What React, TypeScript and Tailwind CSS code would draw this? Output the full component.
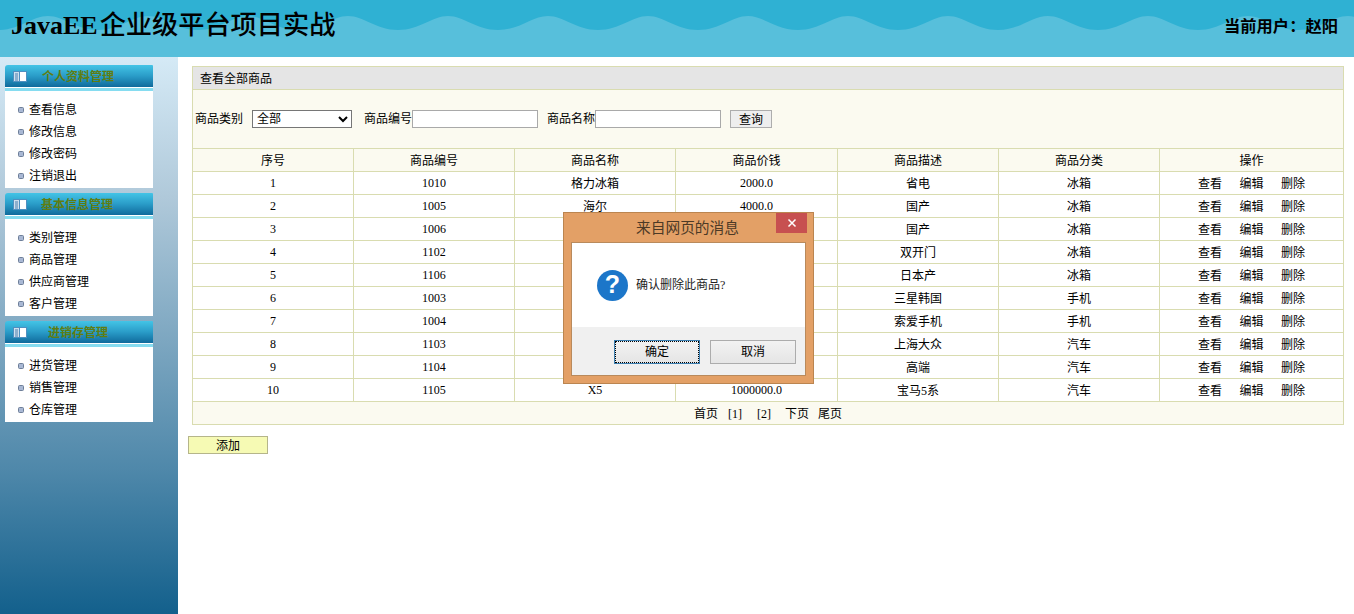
const FONT = "font-['Liberation_Serif','Noto_Sans_CJK_SC',serif]";

const menus = [
  { title: "个人资料管理", items: ["查看信息", "修改信息", "修改密码", "注销退出"], pad: "pl-[15px]" },
  { title: "基本信息管理", items: ["类别管理", "商品管理", "供应商管理", "客户管理"], pad: "pl-[14px]" },
  { title: "进销存管理", items: ["进货管理", "销售管理", "仓库管理"], pad: "pl-[21px]" },
];

const columns = ["序号", "商品编号", "商品名称", "商品价钱", "商品描述", "商品分类", "操作"];
const widths = ["w-[161px]", "w-[161px]", "w-[161px]", "w-[162px]", "w-[161px]", "w-[161px]", "w-[184px]"];

const rows = [
  ["1", "1010", "格力冰箱", "2000.0", "省电", "冰箱"],
  ["2", "1005", "海尔", "4000.0", "国产", "冰箱"],
  ["3", "1006", "", "", "国产", "冰箱"],
  ["4", "1102", "", "", "双开门", "冰箱"],
  ["5", "1106", "", "", "日本产", "冰箱"],
  ["6", "1003", "", "", "三星韩国", "手机"],
  ["7", "1004", "", "", "索爱手机", "手机"],
  ["8", "1103", "", "", "上海大众", "汽车"],
  ["9", "1104", "", "", "高端", "汽车"],
  ["10", "1105", "X5", "1000000.0", "宝马5系", "汽车"],
];

let wave = "M0 57 L0 30";
for (let x = -102; x < 1354; x += 100) {
  wave += ` L${x} 30 C${x + 22} 30 ${x + 34} 16 ${x + 50} 16 C${x + 66} 16 ${x + 78} 30 ${x + 100} 30`;
}
wave += " L1354 57 Z";

function BookIcon() {
  return (
    <svg width="14" height="11" viewBox="0 0 14 11" className="mb-[2px] shrink-0">
      <rect x="0.5" y="0.5" width="13" height="10" fill="#ffffff" stroke="#4f8fc0" />
      <rect x="1" y="1" width="5" height="9" fill="#cfe0ee" />
      <path d="M2 3h3M2 5h3M2 7h3M2 9h3" stroke="#4a7fae" strokeWidth="1" />
      <path d="M6.5 1v9" stroke="#4f8fc0" />
    </svg>
  );
}

function SideMenu({ title, items, pad }: { title: string; items: string[]; pad: string }) {
  return (
    <div className="w-[148px]">
      <div className="flex h-[22px] items-center rounded-tl-[3px] rounded-tr-[1px] bg-[linear-gradient(#43c4e6,#2a9cc8_50%,#0f6a9c)] pl-[8px] pt-[2px]">
        <BookIcon />
        <span className={`${pad} text-[12px] font-bold text-[#5f7d12]`}>{title}</span>
      </div>
      <div className="h-px bg-white" />
      <div className="h-[3px] bg-[#86dcf0]" />
      <ul className="flex flex-col bg-white pb-px pt-[8px]">
        {items.map((item) => (
          <li key={item} className="flex h-[22px] items-center gap-[5px] pl-[13px] text-[12px] text-black">
            <span className="h-[6px] w-[6px] rounded-[1.5px] border border-[#6e7f99] bg-[#a9b8d4]" />
            {item}
          </li>
        ))}
      </ul>
    </div>
  );
}

function Dialog() {
  return (
    <div className="absolute left-[563px] top-[212px] flex h-[172px] w-[251px] flex-col border border-[#bb8550] bg-[#e3a066] px-[7px] pb-[7px]">
      <div className="relative flex h-[29px] items-center justify-center pr-[2px] pt-[2px] text-[14.7px] text-[#4d3a26]">
        来自网页的消息
        <button className="absolute right-[-1px] top-0 flex h-[20px] w-[31px] items-center justify-center bg-[#c75050]">
          <svg width="10" height="10" viewBox="0 0 10 10">
            <path d="M1.5 1.5l7 7M8.5 1.5l-7 7" stroke="#ffffff" strokeWidth="1.5" />
          </svg>
        </button>
      </div>
      <div className="flex flex-1 flex-col border border-[#b98a5c] bg-white">
        <div className="flex flex-1 items-center gap-[8px] pl-[25px]">
          <div className="flex h-[31px] w-[31px] items-center justify-center rounded-full bg-[#1c76c9] text-[25px] font-bold text-white">
            <span className="font-['Liberation_Sans',sans-serif]">?</span>
          </div>
          <span className="text-[12px] text-[#222222]">确认删除此商品?</span>
        </div>
        <div className="flex h-[48px] items-start justify-end gap-[10px] bg-[#f0f0f0] pr-[9px] pt-[13px]">
          <button className="flex h-[24px] w-[86px] items-center justify-center border border-[#3c7fb1] bg-[linear-gradient(#f2f2f2,#e5e5e5)] text-[12px] text-black outline-1 -outline-offset-2 outline-dotted outline-black">
            确定
          </button>
          <button className="flex h-[24px] w-[86px] items-center justify-center border border-[#acacac] bg-[linear-gradient(#f2f2f2,#e5e5e5)] text-[12px] text-black">
            取消
          </button>
        </div>
      </div>
    </div>
  );
}

export default function App() {
  return (
    <div className={`relative flex h-screen w-full flex-col overflow-hidden bg-white ${FONT}`}>
      <header className="relative flex h-[57px] shrink-0 items-center justify-between overflow-hidden bg-[#2fb1d3] pb-[5px] pl-[11px] pr-[16px]">
        <svg className="absolute left-0 top-0" width="1354" height="57" viewBox="0 0 1354 57">
          <path d={wave} fill="#57bfdb" />
        </svg>
        <h1 className="relative flex items-baseline text-[26px] text-black">
          <span className="font-bold">JavaEE</span>
          <span className="pl-[2px] text-[26.2px] font-medium">企业级平台项目实战</span>
        </h1>
        <span className="relative pt-[3px] text-[16.3px] font-bold text-black">当前用户：赵阳</span>
      </header>

      <div className="flex flex-1">
        <aside className="flex w-[178px] shrink-0 flex-col gap-[5px] bg-[linear-gradient(#d5eaf6,#b0c9da_25%,#4f88aa_74%,#13608c)] pl-[5px] pt-[8px]">
          {menus.map((menu) => (
            <SideMenu key={menu.title} {...menu} />
          ))}
        </aside>

        <main className="flex flex-1 flex-col pl-[10px] pt-[9px]">
          <table className="ml-[4px] w-[1152px] table-fixed border-collapse text-[12px] text-black">
            <colgroup>
              {widths.map((w, i) => (
                <col key={i} className={w} />
              ))}
            </colgroup>
            <tbody>
              <tr>
                <td colSpan={7} className="h-[23px] border border-[#d9dcb0] bg-[#e5e5e5] pl-[7px] pt-px">
                  查看全部商品
                </td>
              </tr>
              <tr>
                <td colSpan={7} className="h-[59px] border border-[#d9dcb0] bg-[#fbfaf0] pl-[2px]">
                  <div className="flex items-center">
                    <span>商品类别</span>
                    <select className="ml-[9px] h-[18px] w-[100px] border border-[#767676] bg-white text-[12px]">
                      <option>全部</option>
                    </select>
                    <span className="ml-[12px]">商品编号</span>
                    <input className="h-[18px] w-[126px] border border-[#a9a9a9] bg-white" />
                    <span className="ml-[9px]">商品名称</span>
                    <input className="h-[18px] w-[126px] border border-[#a9a9a9] bg-white" />
                    <button className="ml-[9px] h-[18px] w-[42px] border border-[#adadad] bg-[#eeeeee] text-[12px]">
                      查询
                    </button>
                  </div>
                </td>
              </tr>
              <tr>
                {columns.map((col) => (
                  <td key={col} className="h-[23px] border border-[#d9dcb0] bg-[#fbfaf0] pt-px text-center">
                    {col}
                  </td>
                ))}
              </tr>
              {rows.map((row) => (
                <tr key={row[0]}>
                  {row.map((cell, i) => (
                    <td
                      key={i}
                      className={`h-[23px] border border-[#d9dcb0] bg-white text-center ${/[^\x00-\x7f]/.test(cell) ? "pt-px" : ""}`}
                    >
                      {cell}
                    </td>
                  ))}
                  <td className="h-[23px] border border-[#d9dcb0] bg-white pt-px">
                    <div className="flex justify-center gap-[17.5px]">
                      <span>查看</span>
                      <span>编辑</span>
                      <span>删除</span>
                    </div>
                  </td>
                </tr>
              ))}
              <tr>
                <td colSpan={7} className="h-[23px] border border-[#d9dcb0] bg-[#fbfaf0] pt-px">
                  <div className="flex justify-center">
                    <span>首页</span>
                    <span className="ml-[10px]">[1]</span>
                    <span className="ml-[15px]">[2]</span>
                    <span className="ml-[14px]">下页</span>
                    <span className="ml-[9px]">尾页</span>
                  </div>
                </td>
              </tr>
            </tbody>
          </table>
          <button className="mt-[11px] h-[18px] w-[80px] border border-[#b5b58a] bg-[#f6fab4] text-[12px] text-black">
            添加
          </button>
        </main>
      </div>

      <Dialog />
    </div>
  );
}
